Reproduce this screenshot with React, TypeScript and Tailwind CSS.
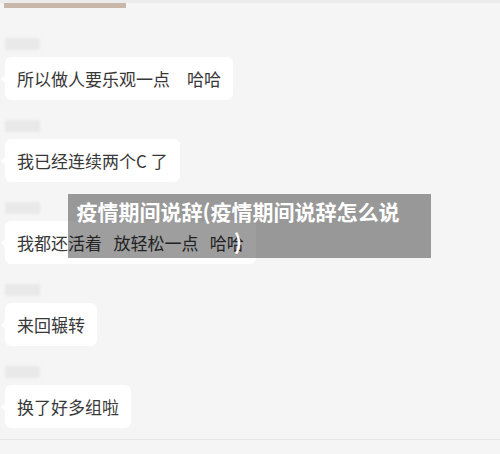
const messages = [
  '所以做人要乐观一点　哈哈',
  '我已经连续两个C 了',
  '我都还活着   放轻松一点   哈哈',
  '来回辗转',
  '换了好多组啦',
];

function Bubble({ text }: { text: string }) {
  return (
    <div className="h-[82px] flex flex-col">
      {/* blurred nickname */}
      <div className="h-[39px] pt-[20px]">
        <div className="w-[35px] h-[12px] bg-[#e9e9e9] rounded-[2px] blur-[1px]" />
      </div>
      <div className="relative self-start">
        <div className="absolute left-[-4px] top-[17px] w-0 h-0 border-y-[5px] border-y-transparent border-r-[5px] border-r-white" />
        <div className="h-[43px] flex items-center px-[12px] bg-white rounded-[6px] text-[17px] leading-[24px] text-[#383838] whitespace-pre">
          {text}
        </div>
      </div>
    </div>
  );
}

export default function App() {
  return (
    <div
      className="relative w-[500px] h-[454px] overflow-hidden bg-[#f5f5f5]"
      style={{ fontFamily: '"Noto Sans CJK SC", "Noto Sans", sans-serif' }}
    >
      <div className="h-[3px] bg-[#ececec]" />
      <div className="ml-[4px] w-[122px] h-[5px] bg-[#c8b8aa]" />

      <div className="pl-[5px] pt-[10px]">
        {messages.map((m) => (
          <Bubble key={m} text={m} />
        ))}
      </div>
      <div className="mt-[11px] h-px bg-[#e6e6e6]" />

      {/* caption overlay */}
      <div className="absolute left-[68px] top-[194px] w-[363px] h-[64px] bg-[rgba(0,0,0,0.38)] pl-[7px] pr-[30px] pt-[2px] text-center text-white font-bold text-[21px] leading-[30px] [line-break:anywhere]">
        疫情期间说辞(疫情期间说辞怎么说)
      </div>
    </div>
  );
}
